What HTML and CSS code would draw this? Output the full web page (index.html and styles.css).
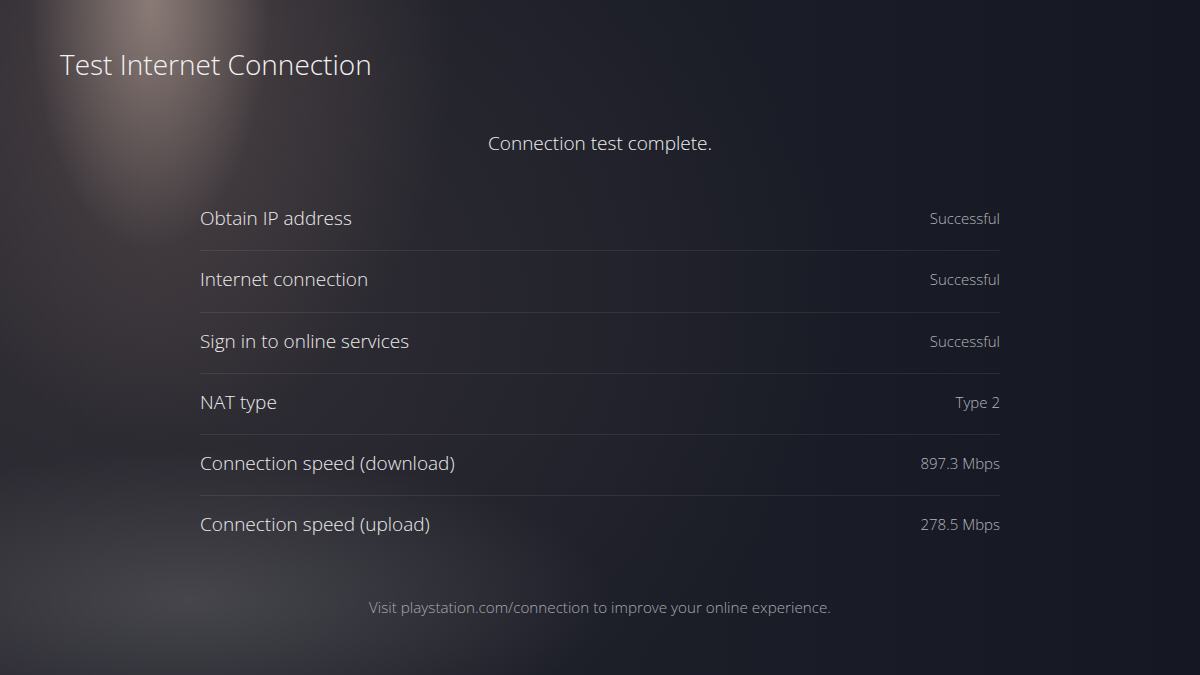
FILE: index.html
```html
<!DOCTYPE html>
<html>
<head>
<meta charset="utf-8">
<link rel="stylesheet" href="styles.css">
</head>
<body>
<div class="screen">
  <h1 class="title">Test Internet Connection</h1>
  <p class="status">Connection test complete.</p>
  <div class="list">
    <div class="row"><span class="label">Obtain IP address</span><span class="value">Successful</span></div>
    <div class="row"><span class="label">Internet connection</span><span class="value">Successful</span></div>
    <div class="row"><span class="label">Sign in to online services</span><span class="value">Successful</span></div>
    <div class="row"><span class="label">NAT type</span><span class="value">Type 2</span></div>
    <div class="row"><span class="label">Connection speed (download)</span><span class="value">897.3 Mbps</span></div>
    <div class="row"><span class="label">Connection speed (upload)</span><span class="value">278.5 Mbps</span></div>
  </div>
  <p class="footer">Visit playstation.com/connection to improve your online experience.</p>
</div>
</body>
</html>
```
FILE: styles.css
```css
html, body {
  margin: 0;
  padding: 0;
}
body {
  width: 1200px;
  height: 675px;
  overflow: hidden;
  font-family: "Open Sans", "Noto Sans", sans-serif;
  font-weight: 300;
  color: #ececec;
}
.screen {
  width: 1200px;
  height: 675px;
  box-sizing: border-box;
  display: flex;
  flex-direction: column;
  background:
    radial-gradient(ellipse 120px 250px at 150px 0px, rgba(185,165,155,0.58), rgba(185,165,155,0) 100%),
    radial-gradient(ellipse 290px 410px at 165px 30px, rgba(120,100,95,0.45), rgba(120,100,95,0) 100%),
    radial-gradient(ellipse 420px 150px at 190px 600px, rgba(95,95,100,0.55), rgba(95,95,100,0) 100%),
    radial-gradient(ellipse 700px 500px at 150px 300px, rgba(60,55,60,0.6), rgba(60,55,60,0) 100%),
    linear-gradient(90deg, #23232c 0%, #1c1e28 50%, #151823 100%);
}
.title {
  margin: 46px 0 0 60px;
  font-size: 28px;
  font-weight: 300;
  line-height: 36px;
  color: #f2f2f2;
}
.status {
  margin: 49px 0 0 0;
  text-align: center;
  font-size: 19px;
  line-height: 24px;
  color: #f0f0f0;
}
.list {
  margin: 35px 200px 0 200px;
  display: flex;
  flex-direction: column;
}
.row {
  display: flex;
  justify-content: space-between;
  align-items: center;
  height: 56.25px;
  padding-bottom: 4px;
  border-top: 1px solid rgba(255,255,255,0.08);
}
.row:first-child {
  border-top: none;
}
.label {
  font-size: 19px;
  color: #ececec;
}
.value {
  font-size: 15px;
  color: #b6b6bc;
}
.footer {
  margin: 40px 0 0 0;
  text-align: center;
  font-size: 15.2px;
  line-height: 20px;
  color: #a9a9b0;
}
```
